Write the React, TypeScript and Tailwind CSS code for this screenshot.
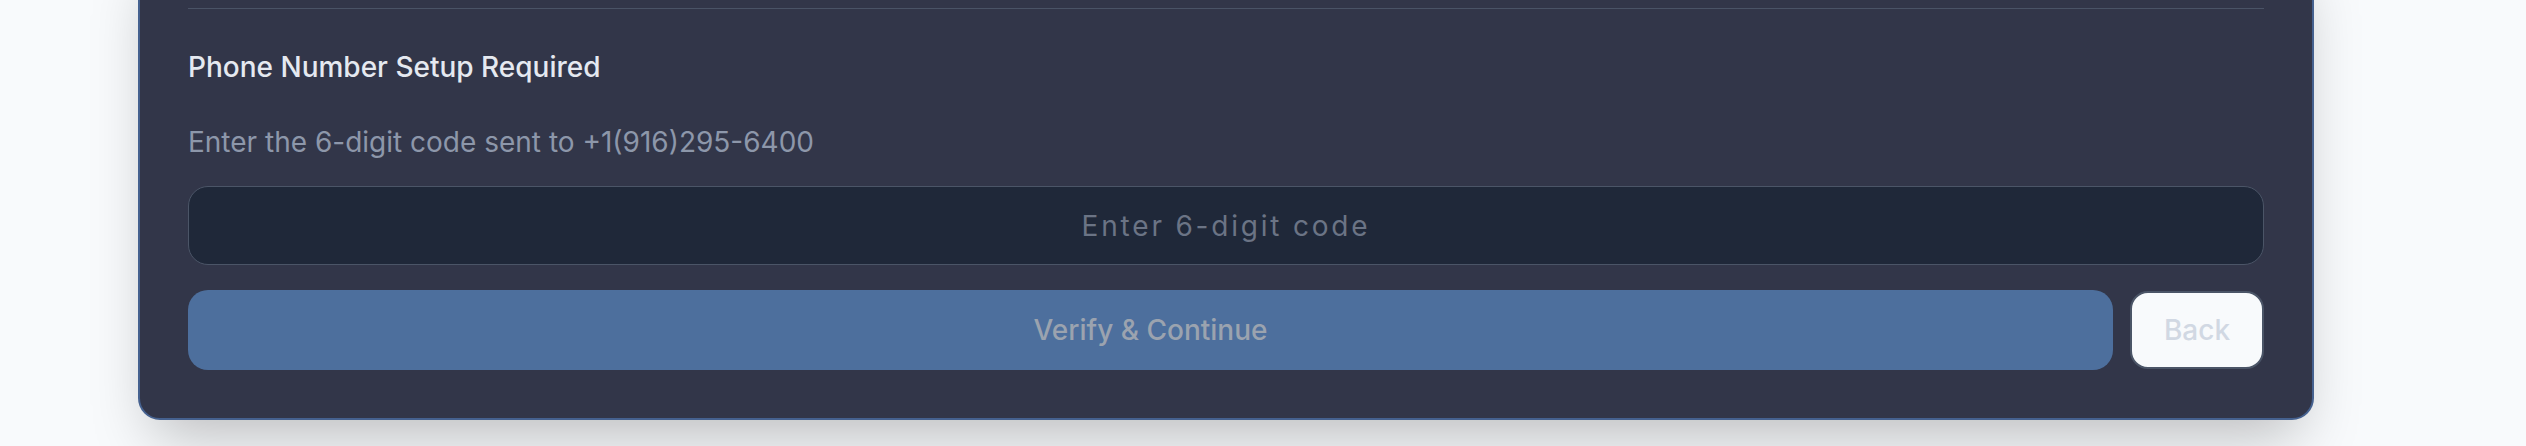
import React from "react";

export default function App() {
  return (
    <div className="min-h-[446px] w-[2526px] overflow-hidden bg-[#f8fafc]" style={{ fontFamily: "Inter, 'Noto Sans', sans-serif" }}>
      <div className="ml-[138px] mt-[-60px] w-[2176px] rounded-[22px] border-2 border-[#45618f] bg-[#323649] px-[48px] pb-[48px] pt-[66px] shadow-[0_30px_60px_-15px_rgba(0,0,0,0.25)]">
        <div className="h-px bg-[#4a5366]" />
        <h2 className="mt-[38px] text-[28px] font-medium leading-[40px] text-[#e5e9f0]">Phone Number Setup Required</h2>
        <p className="mt-[37px] text-[28px] leading-[36px] text-[#8d97aa]">Enter the 6-digit code sent to +1(916)295-6400</p>
        <input
          type="text"
          placeholder="Enter 6-digit code"
          className="mt-[26px] block h-[79px] w-full rounded-[20px] border border-[#4b5567] bg-[#1f2839] text-center text-[28px] tracking-[0.1em] text-[#e5e9f0] placeholder:text-[#6b7485] outline-none"
        />
        <div className="mt-[25px] flex items-center gap-[17px]">
          <button className="flex h-[80px] flex-1 items-center justify-center rounded-[20px] bg-[#4d6f9d] text-[28px] font-medium text-[#9ba3af]">
            Verify &amp; Continue
          </button>
          <button className="flex h-[78px] w-[134px] items-center justify-center rounded-[18px] border-2 border-[#4b5567] bg-[#f8fafc] text-[28px] font-medium text-[#d1d8e3]">
            Back
          </button>
        </div>
      </div>
    </div>
  );
}
